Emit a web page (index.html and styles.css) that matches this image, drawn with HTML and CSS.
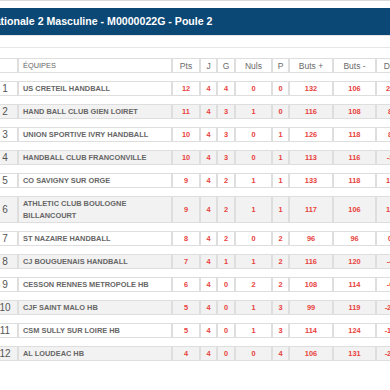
FILE: index.html
```html
<!DOCTYPE html>
<html lang="fr">
<head>
<meta charset="utf-8">
<title>Classement</title>
<link rel="stylesheet" href="styles.css">
</head>
<body>
<div class="page">
  <div class="topline"></div>
  <div class="panel-title">Nationale 2 Masculine - M0000022G - Poule 2</div>
  <div class="subbar"></div>
  <table class="standings">
    <colgroup>
      <col class="c-rank"><col class="c-team"><col class="c-pts"><col class="c-j"><col class="c-g"><col class="c-n"><col class="c-p"><col class="c-bp"><col class="c-bm"><col class="c-d">
    </colgroup>
    <thead>
      <tr><th></th><th class="team">ÉQUIPES</th><th>Pts</th><th>J</th><th>G</th><th>Nuls</th><th>P</th><th>Buts +</th><th>Buts -</th><th>Diff</th></tr>
    </thead>
    <tbody>
      <tr><td class="rank">1</td><td class="team">US CRETEIL HANDBALL</td><td>12</td><td>4</td><td>4</td><td>0</td><td>0</td><td>132</td><td>106</td><td>26</td></tr>
      <tr><td class="rank">2</td><td class="team">HAND BALL CLUB GIEN LOIRET</td><td>11</td><td>4</td><td>3</td><td>1</td><td>0</td><td>116</td><td>108</td><td>8</td></tr>
      <tr><td class="rank">3</td><td class="team">UNION SPORTIVE IVRY HANDBALL</td><td>10</td><td>4</td><td>3</td><td>0</td><td>1</td><td>126</td><td>118</td><td>8</td></tr>
      <tr><td class="rank">4</td><td class="team">HANDBALL CLUB FRANCONVILLE</td><td>10</td><td>4</td><td>3</td><td>0</td><td>1</td><td>113</td><td>116</td><td>-3</td></tr>
      <tr><td class="rank">5</td><td class="team">CO SAVIGNY SUR ORGE</td><td>9</td><td>4</td><td>2</td><td>1</td><td>1</td><td>133</td><td>118</td><td>15</td></tr>
      <tr><td class="rank">6</td><td class="team">ATHLETIC CLUB BOULOGNE BILLANCOURT</td><td>9</td><td>4</td><td>2</td><td>1</td><td>1</td><td>117</td><td>106</td><td>11</td></tr>
      <tr><td class="rank">7</td><td class="team">ST NAZAIRE HANDBALL</td><td>8</td><td>4</td><td>2</td><td>0</td><td>2</td><td>96</td><td>96</td><td>0</td></tr>
      <tr><td class="rank">8</td><td class="team">CJ BOUGUENAIS HANDBALL</td><td>7</td><td>4</td><td>1</td><td>1</td><td>2</td><td>116</td><td>120</td><td>-4</td></tr>
      <tr><td class="rank">9</td><td class="team">CESSON RENNES METROPOLE HB</td><td>6</td><td>4</td><td>0</td><td>2</td><td>2</td><td>108</td><td>114</td><td>-6</td></tr>
      <tr><td class="rank">10</td><td class="team">CJF SAINT MALO HB</td><td>5</td><td>4</td><td>0</td><td>1</td><td>3</td><td>99</td><td>119</td><td>-20</td></tr>
      <tr><td class="rank">11</td><td class="team">CSM SULLY SUR LOIRE HB</td><td>5</td><td>4</td><td>0</td><td>1</td><td>3</td><td>114</td><td>124</td><td>-10</td></tr>
      <tr><td class="rank">12</td><td class="team">AL LOUDEAC HB</td><td>4</td><td>4</td><td>0</td><td>0</td><td>4</td><td>106</td><td>131</td><td>-25</td></tr>
    </tbody>
  </table>
</div>
</body>
</html>
```
FILE: styles.css
```css
html, body {
  margin: 0;
  padding: 0;
  background: #ffffff;
  overflow: hidden;
}
body {
  font-family: "Liberation Sans", Arial, sans-serif;
  width: 390px;
  height: 390px;
}
.page {
  margin-left: -30px;
  width: 480px;
}
.topline {
  height: 1px;
  background: #d9d9d9;
  margin-bottom: 7px;
}
.panel-title {
  background: #0c4876;
  color: #ffffff;
  font-weight: bold;
  font-size: 10.6px;
  height: 27px;
  line-height: 27px;
  padding-left: 17px;
  white-space: nowrap;
}
.subbar {
  height: 11px;
  border-top: 1px solid #e6e6e6;
  border-bottom: 1px solid #e6e6e6;
  margin-bottom: 10px;
}
.standings {
  margin-left: 22px;
  table-layout: fixed;
  border-collapse: separate;
  border-spacing: 0 8px;
  width: 412px;
  margin-top: -8px;
}
.c-rank { width: 26px; }
.c-team { width: 154px; }
.c-pts { width: 28px; }
.c-j { width: 17px; }
.c-g { width: 18px; }
.c-n { width: 37px; }
.c-p { width: 17px; }
.c-bp { width: 44px; }
.c-bm { width: 43px; }
.c-d { width: 28px; }

.standings th,
.standings td {
  box-sizing: border-box;
  border: 1px solid #dedede;
  padding: 0.5px 0;
  line-height: 12px;
  text-align: center;
  vertical-align: middle;
  white-space: nowrap;
  overflow: hidden;
}
.standings th {
  font-weight: normal;
  font-size: 8.5px;
  color: #6a6a6a;
  background: #ffffff;
  height: 15px;
}
.standings td {
  font-weight: bold;
  font-size: 7.4px;
  color: #e8423d;
  height: 15px;
}
.standings th.team,
.standings td.team {
  text-align: left;
  padding-left: 4px;
  color: #666666;
  white-space: normal;
}
.standings th.team {
  font-size: 7.4px;
}
.standings td.team {
  font-size: 7.4px;
  padding-right: 20px;
}
.standings td.rank {
  font-weight: normal;
  font-size: 10px;
  color: #555555;
}
.standings tbody tr:nth-child(even) td {
  background: #f2f2f2;
}
.standings tbody tr:nth-child(odd) td {
  background: #ffffff;
}
```
